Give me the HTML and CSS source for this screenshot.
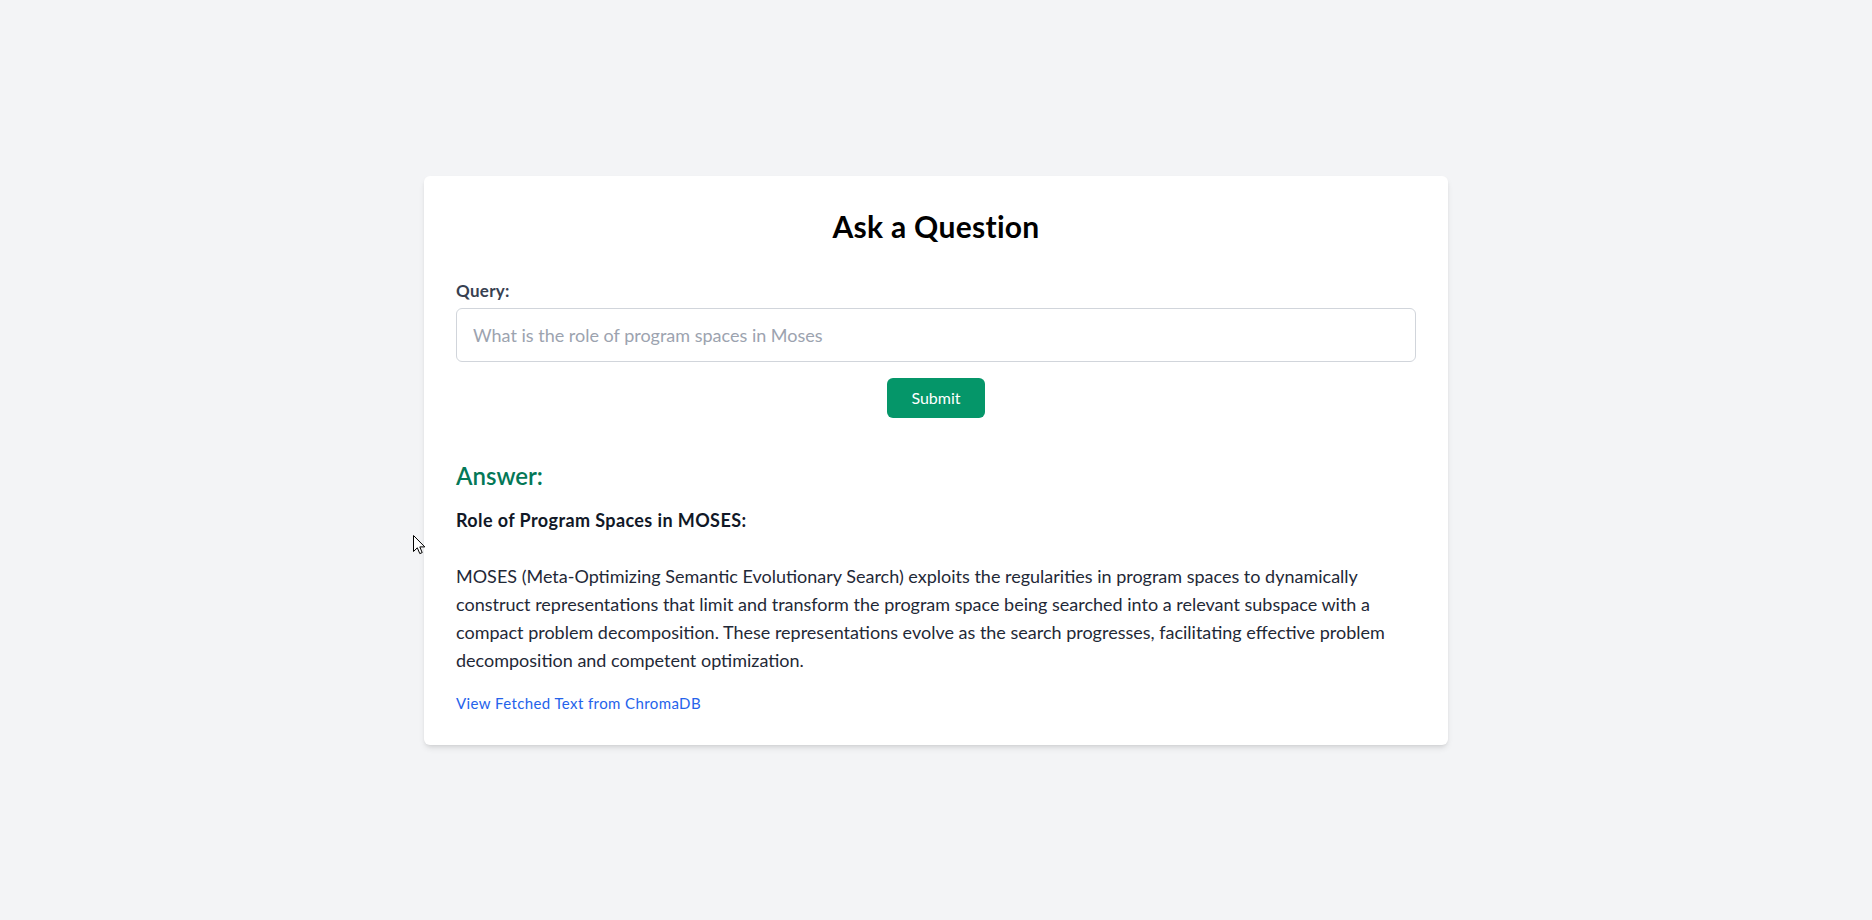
FILE: index.html
```html
<!DOCTYPE html>
<html lang="en">
<head>
<meta charset="utf-8">
<title>Ask a Question</title>
<link rel="stylesheet" href="styles.css">
</head>
<body>
<main class="page">
  <section class="card">
    <h1 class="title">Ask a Question</h1>
    <form class="form">
      <label class="label" for="query">Query:</label>
      <input class="input" id="query" type="text" placeholder="What is the role of program spaces in Moses">
      <div class="actions">
        <button class="submit" type="button">Submit</button>
      </div>
    </form>
    <div class="answer">
      <h2 class="answer-title">Answer:</h2>
      <p class="answer-text"><strong>Role of Program Spaces in MOSES:</strong><br><br>MOSES (Meta-Optimizing Semantic Evolutionary Search) exploits the regularities in program spaces to dynamically construct representations that limit and transform the program space being searched into a relevant subspace with a compact problem decomposition. These representations evolve as the search progresses, facilitating effective problem decomposition and competent optimization.</p>
      <a class="link" href="#">View Fetched Text from ChromaDB</a>
    </div>
  </section>
  <svg class="cursor" width="13" height="20" viewBox="0 0 13 20" aria-hidden="true">
    <path d="M0.5 0.5 L0.5 16.5 L4.3 12.8 L6.8 18.6 L9.2 17.6 L6.8 11.9 L11.8 11.9 Z" fill="#fff" stroke="#000" stroke-width="1" stroke-linejoin="miter"/>
  </svg>
</main>
</body>
</html>
```

FILE: styles.css
```css
* {
  box-sizing: border-box;
}

html, body {
  margin: 0;
  padding: 0;
}

body {
  background: #f3f4f6;
  font-family: "Lato", "Open Sans", "Noto Sans", sans-serif;
  color: #1f2937;
}

.page {
  position: relative;
  min-height: 100vh;
  display: flex;
  align-items: center;
  justify-content: center;
}

.card {
  width: 1024px;
  background: #ffffff;
  border-radius: 6px;
  box-shadow: 0 4px 6px -1px rgba(0, 0, 0, 0.1), 0 2px 4px -2px rgba(0, 0, 0, 0.1);
  padding: 32px;
}

.title {
  margin: 0 0 33px 0;
  text-align: center;
  font-size: 30px;
  line-height: 36px;
  font-weight: 700;
  letter-spacing: 0.3px;
  color: #000000;
}

.form {
  display: flex;
  flex-direction: column;
}

.label {
  display: block;
  font-size: 17px;
  line-height: 28px;
  font-weight: 700;
  letter-spacing: 0.3px;
  color: #374151;
  margin-bottom: 3px;
}

.input {
  width: 100%;
  height: 54px;
  padding: 12px 16px;
  border: 1px solid #d1d5db;
  border-radius: 6px;
  font-family: inherit;
  font-size: 18px;
  line-height: 28px;
  color: #111827;
  background: #fff;
  outline: none;
}

.input::placeholder {
  color: #9ca3af;
}

.actions {
  display: flex;
  justify-content: center;
  margin-top: 16px;
}

.submit {
  height: 40px;
  padding: 0 24px;
  border: none;
  border-radius: 6px;
  background: #059669;
  color: #ffffff;
  font-family: inherit;
  font-size: 16px;
  line-height: 24px;
  cursor: pointer;
}

.answer {
  margin-top: 42px;
}

.answer-title {
  margin: 0 0 14px 0;
  font-size: 24px;
  line-height: 32px;
  font-weight: 600;
  color: #047857;
}

.answer-text {
  margin: 0;
  font-size: 18px;
  line-height: 28px;
  color: #1f2937;
}

.answer-text strong {
  font-weight: 700;
  letter-spacing: 0.4px;
  color: #111827;
}

.link {
  display: inline-block;
  margin-top: 19px;
  font-size: 15px;
  line-height: 20px;
  letter-spacing: 0.4px;
  color: #2563eb;
  text-decoration: none;
}

.cursor {
  position: absolute;
  left: 413px;
  top: 535px;
}
```
